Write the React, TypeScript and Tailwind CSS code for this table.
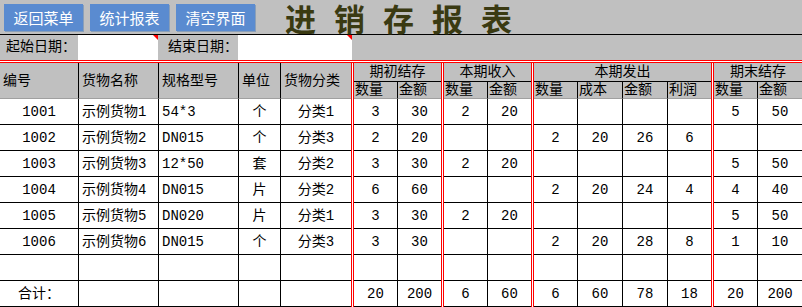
import React from 'react'

const rows: string[][] = [
  ['1001', '示例货物1', '54*3', '个', '分类1', '3', '30', '2', '20', '', '', '', '', '5', '50'],
  ['1002', '示例货物2', 'DN015', '个', '分类3', '2', '20', '', '', '2', '20', '26', '6', '', ''],
  ['1003', '示例货物3', '12*50', '套', '分类2', '3', '30', '2', '20', '', '', '', '', '5', '50'],
  ['1004', '示例货物4', 'DN015', '片', '分类2', '6', '60', '', '', '2', '20', '24', '4', '4', '40'],
  ['1005', '示例货物5', 'DN020', '片', '分类1', '3', '30', '2', '20', '', '', '', '', '5', '50'],
  ['1006', '示例货物6', 'DN015', '个', '分类3', '3', '30', '', '', '2', '20', '28', '8', '1', '10'],
  ['', '', '', '', '', '', '', '', '', '', '', '', '', '', ''],
  ['合计：', '', '', '', '', '20', '200', '6', '60', '6', '60', '78', '18', '20', '200'],
]

// columns that sit right before a red separator (or at the page edge) get no black right border
const noRight = [4, 6, 8, 12, 14]
const sepAfter = [4, 6, 8, 12]
const leftAligned = [1, 2]

function Sep({ span }: { span?: boolean }) {
  return <div className={span ? 'row-span-2 border-x border-[#ff0000] bg-white' : 'border-x border-[#ff0000] bg-white'} />
}

function Corner() {
  return (
    <svg className="absolute top-0 right-0" width="5" height="5" viewBox="0 0 5 5">
      <polygon points="0,0 5,0 5,5" fill="#ff0000" />
    </svg>
  )
}

export default function App() {
  return (
    <div className="w-[802px] h-[307px] overflow-hidden bg-[#c0c0c0] [font-family:'Liberation_Mono','Noto_Sans_CJK_SC',monospace] text-[14px] text-black">
      {/* toolbar */}
      <div className="h-[35px] border-b border-black flex items-center pl-[4px]">
        <div className="flex gap-[7px] self-start mt-[4px] font-['Noto_Sans_CJK_SC',sans-serif]">
          {['返回菜单', '统计报表', '清空界面'].map((t) => (
            <button
              key={t}
              className="w-[79px] h-[27px] bg-[#5a8bd0] text-white text-[15px] leading-none flex items-center justify-center shadow-[1px_1px_0_#8a9fb8]"
            >
              {t}
            </button>
          ))}
        </div>
        <div className="ml-[30px] text-[31px] leading-none font-bold tracking-[18px] text-[#3a3a12] font-['Noto_Sans_CJK_SC',sans-serif] whitespace-nowrap">
          进销存报表
        </div>
      </div>

      {/* date row */}
      <div className="h-[25px] flex">
        <div className="w-[78px] pl-[6px] flex items-center">起始日期：</div>
        <div className="w-[80px] bg-white relative">
          <Corner />
        </div>
        <div className="w-[80px] pl-[10px] flex items-center">结束日期：</div>
        <div className="w-[114px] bg-white relative">
          <Corner />
        </div>
      </div>

      <div className="h-[3px] border-y border-[#ff0000] bg-white" />

      {/* report grid */}
      <div className="grid grid-cols-[79px_80px_80px_42px_70px_3px_44px_43px_3px_44px_43px_3px_44px_45px_45px_43px_3px_44px_44px] grid-rows-[19px_17px_repeat(8,26px)] leading-none">
        {['编号', '货物名称', '规格型号', '单位'].map((t) => (
          <div key={t} className="row-span-2 border-r border-black border-b border-b-[#a0a0a0] pl-[3px] flex items-center">
            {t}
          </div>
        ))}
        <div className="row-span-2 border-b border-[#a0a0a0] pl-[3px] flex items-center">货物分类</div>
        <Sep span />
        <div className="col-span-2 border-b border-black flex items-center justify-center">期初结存</div>
        <Sep span />
        <div className="col-span-2 border-b border-black flex items-center justify-center">本期收入</div>
        <Sep span />
        <div className="col-span-4 border-b border-black flex items-center justify-center">本期发出</div>
        <Sep span />
        <div className="col-span-2 border-b border-black flex items-center justify-center">期末结存</div>

        {['数量', '金额', '数量', '金额', '数量', '成本', '金额', '利润', '数量', '金额'].map((t, i) => {
          const last = [1, 3, 7, 9].includes(i)
          return (
            <div
              key={i}
              className={
                last
                  ? 'border-b border-[#a0a0a0] pl-[1px] flex items-center'
                  : 'border-r border-black border-b border-b-[#a0a0a0] pl-[1px] flex items-center'
              }
            >
              {t}
            </div>
          )
        })}

        {rows.map((r, ri) =>
          r.flatMap((v, ci) => {
            const cls = noRight.includes(ci)
              ? leftAligned.includes(ci)
                ? 'bg-white border-b border-black pl-[3px] flex items-center'
                : 'bg-white border-b border-black flex items-center justify-center'
              : leftAligned.includes(ci)
                ? 'bg-white border-b border-r border-black pl-[3px] flex items-center'
                : 'bg-white border-b border-r border-black flex items-center justify-center'
            const cell = (
              <div key={`${ri}-${ci}`} className={cls}>
                {v}
              </div>
            )
            return sepAfter.includes(ci) ? [cell, <Sep key={`${ri}-${ci}-s`} />] : [cell]
          })
        )}
      </div>
    </div>
  )
}
